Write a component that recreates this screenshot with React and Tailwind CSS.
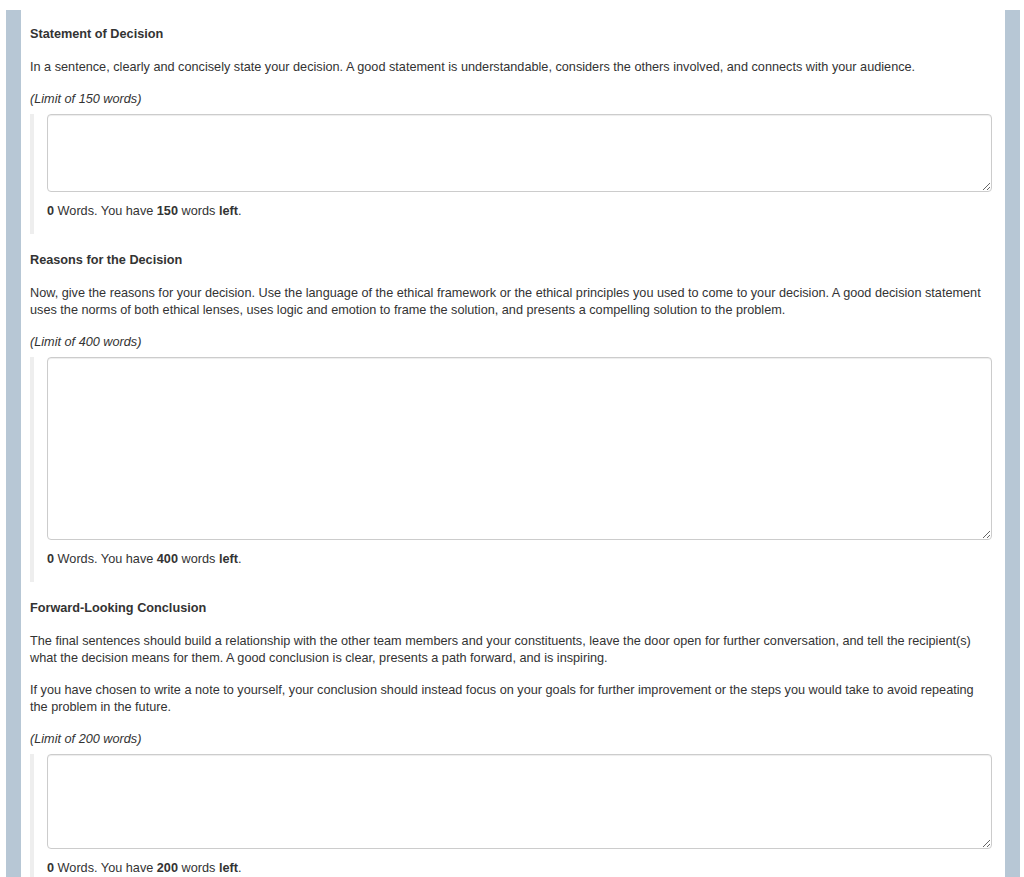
import React, { useState } from 'react';

const sections = [
  {
    title: 'Statement of Decision',
    paragraphs: [
      'In a sentence, clearly and concisely state your decision. A good statement is understandable, considers the others involved, and connects with your audience.',
    ],
    limit: 150,
    height: 'h-[78px]',
  },
  {
    title: 'Reasons for the Decision',
    paragraphs: [
      'Now, give the reasons for your decision. Use the language of the ethical framework or the ethical principles you used to come to your decision. A good decision statement uses the norms of both ethical lenses, uses logic and emotion to frame the solution, and presents a compelling solution to the problem.',
    ],
    limit: 400,
    height: 'h-[183px]',
  },
  {
    title: 'Forward-Looking Conclusion',
    paragraphs: [
      'The final sentences should build a relationship with the other team members and your constituents, leave the door open for further conversation, and tell the recipient(s) what the decision means for them. A good conclusion is clear, presents a path forward, and is inspiring.',
      'If you have chosen to write a note to yourself, your conclusion should instead focus on your goals for further improvement or the steps you would take to avoid repeating the problem in the future.',
    ],
    limit: 200,
    height: 'h-[95px]',
  },
];

function countWords(text) {
  const t = text.trim();
  return t ? t.split(/\s+/).length : 0;
}

function Section({ section }) {
  const [text, setText] = useState('');
  const words = countWords(text);

  return (
    <div className="mb-[18px]">
      <h4 className="font-bold m-0 mb-[16px]">{section.title}</h4>
      {section.paragraphs.map((p, i) => (
        <p key={i} className="mb-[15px]">{p}</p>
      ))}
      <p className="italic mb-[6px]">(Limit of {section.limit} words)</p>
      <div className="border-l-4 border-[#eeeeee] pl-[13px] pb-[14px]">
        <textarea
          value={text}
          onChange={(e) => setText(e.target.value)}
          className={`block w-full ${section.height} border border-[#cccccc] rounded-[4px] bg-white shadow-[inset_0_1px_1px_rgba(0,0,0,0.075)] outline-none px-3 py-1.5`}
        />
        <p className="mt-[11px]">
          <b>{words}</b> Words. You have <b>{section.limit - words}</b> words <b>left</b>.
        </p>
      </div>
    </div>
  );
}

export default function App() {
  return (
    <div className="bg-white min-h-screen pt-[10px] pl-[6px] pr-[4px] text-[12.7px] leading-[17px] text-[#333333] font-['Helvetica_Neue','Liberation_Sans',Arial,sans-serif]">
      <div className="flex">
        <div className="w-[15px] shrink-0 bg-[#b7c7d5]" />
        <div className="flex-1 pl-[9px] pr-[13px] pt-[16px] pb-[40px]">
          {sections.map((s) => (
            <Section key={s.title} section={s} />
          ))}
        </div>
        <div className="w-[15px] shrink-0 bg-[#b7c7d5]" />
      </div>
    </div>
  );
}
